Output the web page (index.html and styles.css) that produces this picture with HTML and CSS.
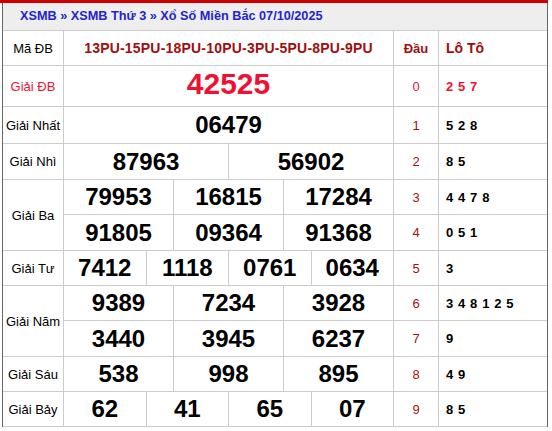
FILE: index.html
```html
<!DOCTYPE html>
<html lang="vi">
<head>
<meta charset="utf-8">
<title>XSMB Thứ 3 - Xổ Số Miền Bắc 07/10/2025</title>
<link rel="stylesheet" href="styles.css">
</head>
<body>
<div class="page">
  <div class="box">
    <div class="title"><a href="#">XSMB</a> » <a href="#">XSMB Thứ 3</a> » <a href="#">Xổ Số Miền Bắc 07/10/2025</a></div>
    <div class="grid">
      <div class="lbl">Mã ĐB</div>
      <div class="prize code">13PU-15PU-18PU-10PU-3PU-5PU-8PU-9PU</div>
      <div class="dau head">Đầu</div>
      <div class="loto head">Lô Tô</div>

      <div class="lbl red">Giải ĐB</div>
      <div class="prize special">42525</div>
      <div class="dau red">0</div>
      <div class="loto red">2 5 7</div>

      <div class="lbl">Giải Nhất</div>
      <div class="prize">06479</div>
      <div class="dau">1</div>
      <div class="loto">5 2 8</div>

      <div class="lbl">Giải Nhì</div>
      <div class="split c2"><span>87963</span><span>56902</span></div>
      <div class="dau">2</div>
      <div class="loto">8 5</div>

      <div class="lbl span2">Giải Ba</div>
      <div class="split c3"><span>79953</span><span>16815</span><span>17284</span></div>
      <div class="dau">3</div>
      <div class="loto">4 4 7 8</div>
      <div class="split c3"><span>91805</span><span>09364</span><span>91368</span></div>
      <div class="dau">4</div>
      <div class="loto">0 5 1</div>

      <div class="lbl">Giải Tư</div>
      <div class="split c4"><span>7412</span><span>1118</span><span>0761</span><span>0634</span></div>
      <div class="dau">5</div>
      <div class="loto">3</div>

      <div class="lbl span2">Giải Năm</div>
      <div class="split c3"><span>9389</span><span>7234</span><span>3928</span></div>
      <div class="dau">6</div>
      <div class="loto">3 4 8 1 2 5</div>
      <div class="split c3"><span>3440</span><span>3945</span><span>6237</span></div>
      <div class="dau">7</div>
      <div class="loto">9</div>

      <div class="lbl">Giải Sáu</div>
      <div class="split c3"><span>538</span><span>998</span><span>895</span></div>
      <div class="dau">8</div>
      <div class="loto">4 9</div>

      <div class="lbl">Giải Bảy</div>
      <div class="split c4"><span>62</span><span>41</span><span>65</span><span>07</span></div>
      <div class="dau">9</div>
      <div class="loto">8 5</div>
    </div>
  </div>
</div>
</body>
</html>
```

FILE: styles.css
```css
html, body {
  margin: 0;
  padding: 0;
  background: #fff;
}

body {
  font-family: "Liberation Sans", Arial, sans-serif;
  color: #000;
}

.page {
  width: 548px;
  border-top: 3px solid #d10000;
}

.box {
  margin-left: 2px;
  width: 546px;
  box-sizing: border-box;
  border-left: 1px solid #666;
  border-right: 1px solid #666;
}

.title {
  height: 27px;
  line-height: 27px;
  padding-left: 17px;
  background: #eeeeee;
  border-bottom: 1px solid #cccccc;
  font-size: 12.7px;
  font-weight: bold;
  color: #2424cc;
  white-space: nowrap;
}

.title a {
  color: #2424cc;
  text-decoration: none;
}

.grid {
  display: grid;
  grid-template-columns: 60px 329px 44px 108px;
  grid-template-rows: 34px 40px 36px 35px 34px 35px 34px 34px 35px 34px 34px;
  gap: 1px;
  background: #cccccc;
  border-bottom: 1px solid #cccccc;
}

.grid > div {
  background: #fff;
  display: flex;
  align-items: center;
}

.lbl {
  justify-content: center;
  font-size: 13px;
  white-space: nowrap;
}

.span2 {
  grid-row: span 2;
}

.red {
  color: #ee1133;
}

.prize {
  justify-content: center;
  font-size: 24px;
  font-weight: bold;
}

.code {
  font-size: 14px;
  letter-spacing: 0.2px;
  color: #9e0f0f;
}

.special {
  font-size: 30px;
  color: #ee1133;
  padding-bottom: 4px;
  box-sizing: border-box;
}

.dau {
  justify-content: center;
  font-size: 13px;
  color: #a01212;
}

.dau.red {
  color: #ee1133;
}

.dau.head {
  font-weight: bold;
  color: #9e0f0f;
}

.loto {
  padding-left: 7px;
  font-size: 13px;
  font-weight: bold;
  word-spacing: 1.2px;
}

.loto.head {
  font-size: 14px;
  word-spacing: 0;
  color: #9e0f0f;
}

.loto.red {
  color: #ee1133;
}

.grid > .split {
  display: grid;
  align-items: stretch;
  gap: 1px;
  background: #cccccc;
}

.c2 { grid-template-columns: 1fr 1fr; }
.c3 { grid-template-columns: 1fr 1fr 1fr; }
.c4 { grid-template-columns: 1fr 1fr 1fr 1fr; }

.split span {
  background: #fff;
  display: flex;
  align-items: center;
  justify-content: center;
  font-size: 24px;
  font-weight: bold;
}
```
